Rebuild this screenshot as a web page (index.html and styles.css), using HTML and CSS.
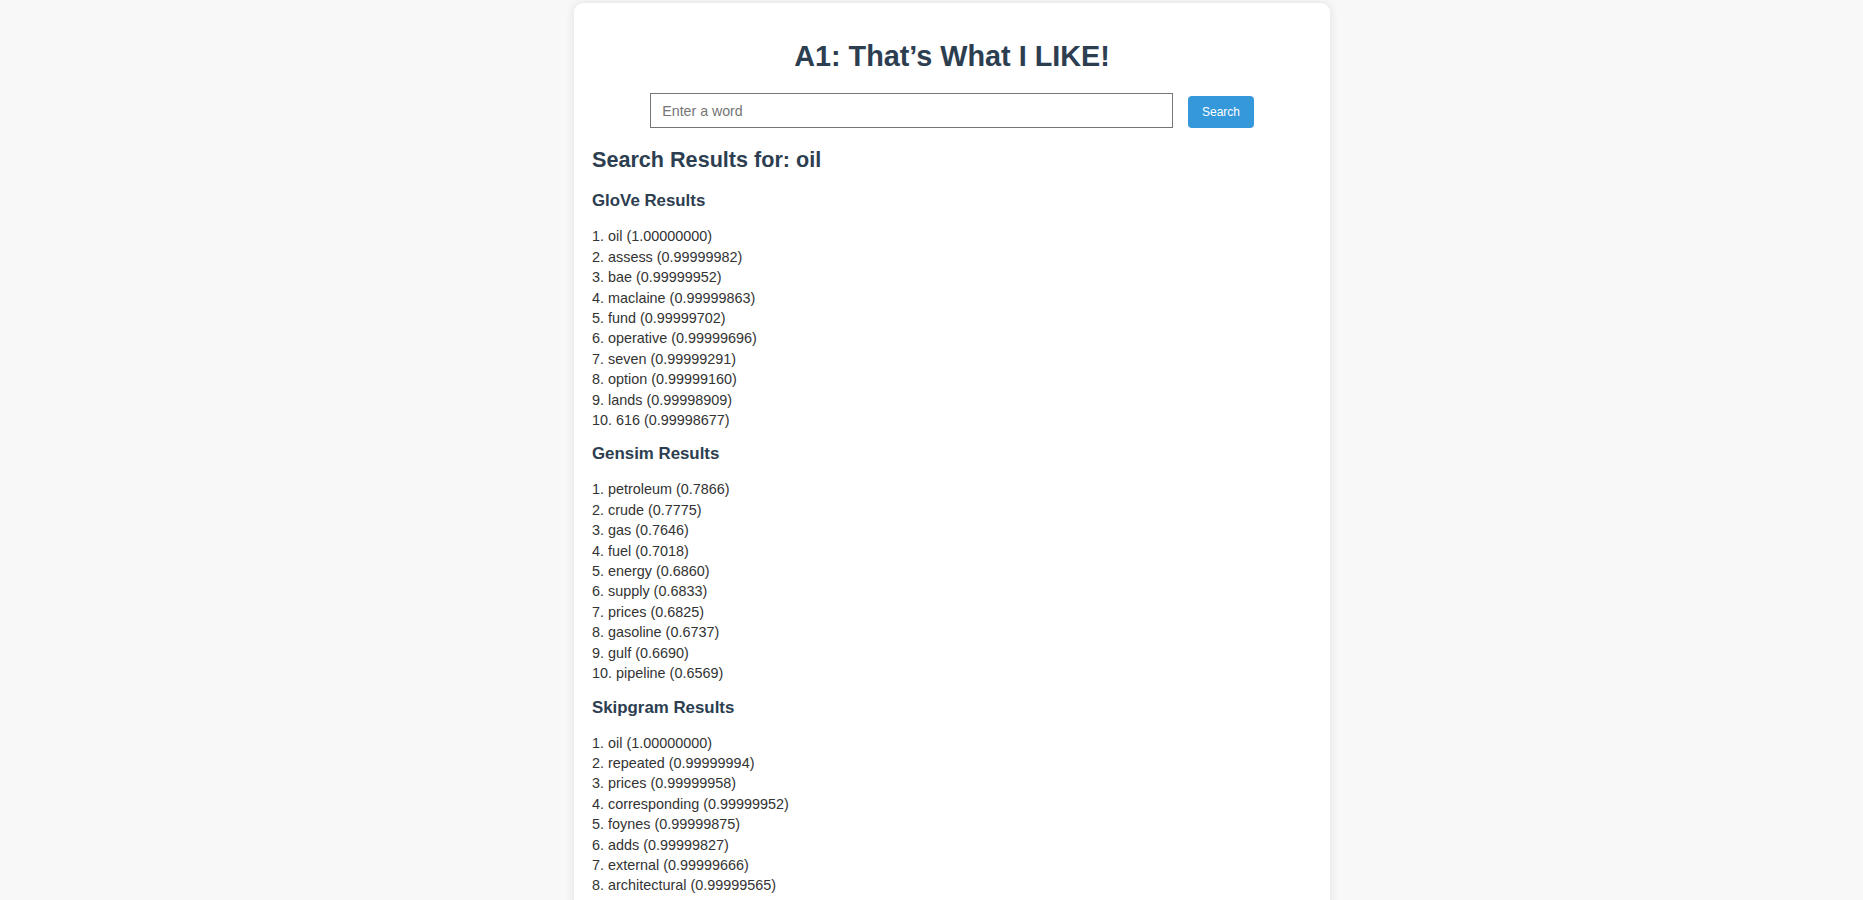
FILE: index.html
```html
<!DOCTYPE html>
<html lang="en">
<head>
<meta charset="utf-8">
<title>A1: That’s What I LIKE!</title>
<link rel="stylesheet" href="styles.css">
</head>
<body>
<div class="card">
  <h1 class="title">A1: That’s What I LIKE!</h1>
  <form class="search-form">
    <input class="search-input" type="text" placeholder="Enter a word">
    <button class="search-btn" type="button">Search</button>
  </form>
  <h2 class="results-title">Search Results for: oil</h2>

  <section class="model">
    <h3 class="model-title">GloVe Results</h3>
    <ol class="result-list">
      <li>oil (1.00000000)</li>
      <li>assess (0.99999982)</li>
      <li>bae (0.99999952)</li>
      <li>maclaine (0.99999863)</li>
      <li>fund (0.99999702)</li>
      <li>operative (0.99999696)</li>
      <li>seven (0.99999291)</li>
      <li>option (0.99999160)</li>
      <li>lands (0.99998909)</li>
      <li>616 (0.99998677)</li>
    </ol>
  </section>

  <section class="model">
    <h3 class="model-title">Gensim Results</h3>
    <ol class="result-list">
      <li>petroleum (0.7866)</li>
      <li>crude (0.7775)</li>
      <li>gas (0.7646)</li>
      <li>fuel (0.7018)</li>
      <li>energy (0.6860)</li>
      <li>supply (0.6833)</li>
      <li>prices (0.6825)</li>
      <li>gasoline (0.6737)</li>
      <li>gulf (0.6690)</li>
      <li>pipeline (0.6569)</li>
    </ol>
  </section>

  <section class="model">
    <h3 class="model-title">Skipgram Results</h3>
    <ol class="result-list">
      <li>oil (1.00000000)</li>
      <li>repeated (0.99999994)</li>
      <li>prices (0.99999958)</li>
      <li>corresponding (0.99999952)</li>
      <li>foynes (0.99999875)</li>
      <li>adds (0.99999827)</li>
      <li>external (0.99999666)</li>
      <li>architectural (0.99999565)</li>
    </ol>
  </section>
</div>
</body>
</html>
```

FILE: styles.css
```css
html {
  background: #f8f8f8;
}

body {
  margin: 0;
  padding: 3px 0 0 41px;
  font-family: "Liberation Sans", Arial, sans-serif;
  color: #333;
  background: #f8f8f8;
}

.card {
  box-sizing: border-box;
  width: 756px;
  margin: 0 auto;
  padding: 18px;
  background: #ffffff;
  border-radius: 9px;
  box-shadow: 0 0 10px rgba(0, 0, 0, 0.1);
}

.title {
  margin: 19.2px 0 20px;
  font-size: 28.8px;
  line-height: 33px;
  font-weight: bold;
  text-align: center;
  color: #2c3e50;
}

.search-form {
  display: flex;
  justify-content: center;
  align-items: flex-end;
  gap: 15px;
  margin: 0;
}

.search-input {
  box-sizing: border-box;
  width: 523px;
  height: 35px;
  margin: 0;
  padding: 0 10.8px;
  border: 1px solid #767676;
  border-radius: 0;
  font-family: "Liberation Sans", Arial, sans-serif;
  font-size: 14.2px;
  color: #333;
  background: #fff;
  outline: none;
}

.search-input::placeholder {
  color: #757575;
}

.search-btn {
  box-sizing: border-box;
  height: 32px;
  margin: 0 0 0.5px;
  padding: 0 13.5px;
  border: none;
  border-radius: 4px;
  background: #3498db;
  color: #fff;
  font-family: "Liberation Sans", Arial, sans-serif;
  font-size: 12px;
  cursor: pointer;
}

.results-title {
  margin: 18.5px 0 19.7px;
  font-size: 21.6px;
  line-height: 25px;
  font-weight: bold;
  color: #2c3e50;
}

.model-title {
  margin: 0 0 15.5px;
  font-size: 16.85px;
  line-height: 19.5px;
  font-weight: bold;
  color: #2c3e50;
}

.result-list {
  margin: 0 0 14px;
  padding: 0;
  list-style: decimal inside;
  font-size: 14.4px;
  line-height: 20.4px;
  color: #333;
}
```
